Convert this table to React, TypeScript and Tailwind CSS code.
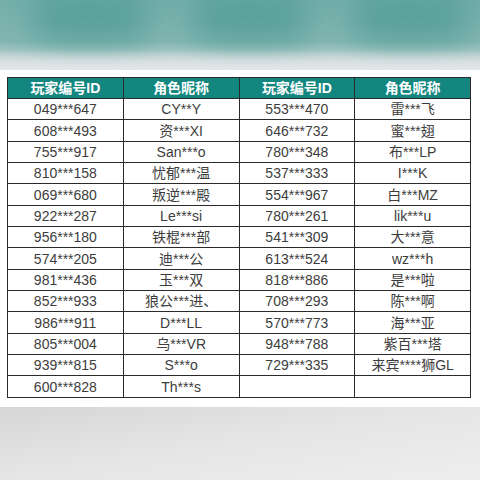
import React from "react";

const left: [string, string][] = [
  ["049***647", "CY**Y"],
  ["608***493", "资***XI"],
  ["755***917", "San***o"],
  ["810***158", "忧郁***温"],
  ["069***680", "叛逆***殿"],
  ["922***287", "Le***si"],
  ["956***180", "铁棍***部"],
  ["574***205", "迪***公"],
  ["981***436", "玉***双"],
  ["852***933", "狼公***进、"],
  ["986***911", "D***LL"],
  ["805***004", "乌***VR"],
  ["939***815", "S***o"],
  ["600***828", "Th***s"],
];

const right: [string, string][] = [
  ["553***470", "雷***飞"],
  ["646***732", "蜜***翅"],
  ["780***348", "布***LP"],
  ["537***333", "I***K"],
  ["554***967", "白***MZ"],
  ["780***261", "lik***u"],
  ["541***309", "大***意"],
  ["613***524", "wz***h"],
  ["818***886", "是***啦"],
  ["708***293", "陈***啊"],
  ["570***773", "海***亚"],
  ["948***788", "紫百***塔"],
  ["729***335", "来宾****狮GL"],
  ["", ""],
];

const font = {
  fontFamily: '"Liberation Sans", "Noto Sans CJK SC", sans-serif',
};

export default function App() {
  const cell = "border border-[#2a2a2a] text-center align-middle p-0 leading-none";

  return (
    <div className="w-[480px] h-[480px] overflow-hidden bg-white" style={font}>
      {/* blurred teal strip */}
      <div className="relative h-[70px] overflow-hidden bg-gradient-to-b from-[#74aeaa] via-[#84b6b3] via-60% to-[#e2e4e5]">
        <div className="absolute left-[30px] top-[-8px] w-[120px] h-[50px] rounded-full bg-[#4f9c96] blur-[16px] opacity-80" />
        <div className="absolute left-[190px] top-[-8px] w-[120px] h-[50px] rounded-full bg-[#4f9c96] blur-[16px] opacity-80" />
        <div className="absolute left-[350px] top-[-8px] w-[120px] h-[50px] rounded-full bg-[#4f9c96] blur-[16px] opacity-80" />
        <div className="absolute left-0 right-0 bottom-0 h-[20px] bg-gradient-to-b from-transparent to-[#e4e5e8]" />
      </div>

      <div className="h-[337px] bg-white pt-[7px] pl-[7px]">
        <table className="w-[464px] border-collapse table-fixed">
          <thead>
            <tr className="h-[21px] bg-[#13877f]">
              <th className={`${cell} text-white text-[14px] font-bold`}>玩家编号ID</th>
              <th className={`${cell} text-white text-[14px] font-bold`}>角色昵称</th>
              <th className={`${cell} text-white text-[14px] font-bold`}>玩家编号ID</th>
              <th className={`${cell} text-white text-[14px] font-bold`}>角色昵称</th>
            </tr>
          </thead>
          <tbody>
            {left.map((l, i) => (
              <tr key={i} className="h-[21.35px] text-[14px] text-[#3d3d3d]">
                <td className={cell}>{l[0]}</td>
                <td className={cell}>{l[1]}</td>
                <td className={cell}>{right[i][0]}</td>
                <td className={cell}>{right[i][1]}</td>
              </tr>
            ))}
          </tbody>
        </table>
      </div>

      <div className="h-[73px] bg-gradient-to-br from-[#d6d6d6] via-[#e6e6e6] to-[#eeeeee]" />
    </div>
  );
}
